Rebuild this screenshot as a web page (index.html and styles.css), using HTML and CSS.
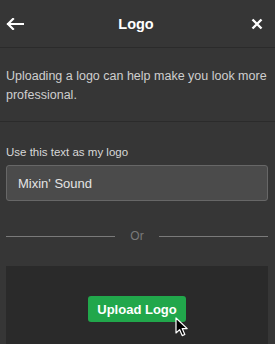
FILE: index.html
```html
<!DOCTYPE html>
<html>
<head>
    <title>Logo</title>
    <link rel="stylesheet" href="styles.css">
</head>
<body>
<div class="panel">
    <header class="panel-header">
        <button class="icon-btn" aria-label="Back">
            <svg width="18" height="12" viewBox="0 0 18 12">
                <path d="M17 6H2M7 1L2 6l5 5" fill="none" stroke="#fff" stroke-width="2.2" stroke-linecap="square"/>
            </svg>
        </button>
        <h1>Logo</h1>
        <button class="icon-btn" aria-label="Close">
            <svg width="12" height="12" viewBox="0 0 12 12">
                <path d="M1.5 1.5l9 9M10.5 1.5l-9 9" stroke="#fff" stroke-width="2.4"/>
            </svg>
        </button>
    </header>

    <div class="intro">
        <p>Uploading a logo can help make you look more professional.</p>
    </div>

    <div class="content">
        <label class="field-label" for="logoText">Use this text as my logo</label>
        <input class="text-input" id="logoText" type="text" value="Mixin' Sound">

        <div class="divider"><span>Or</span></div>

        <div class="upload-box">
            <button class="upload-btn">Upload Logo</button>
            <svg class="cursor" width="14" height="20" viewBox="0 0 14 20">
                <path d="M1 1v15l3.6-3.4 2.6 6 2.6-1.1-2.6-5.9h5z" fill="#000" stroke="#fff" stroke-width="1.2" stroke-linejoin="round"/>
            </svg>
        </div>
    </div>
</div>
</body>
</html>
```

FILE: styles.css
```css
body {
    margin: 0;
    background-color: #363636;
    font-family: "Liberation Sans", Arial, sans-serif;
    color: #d0d0d0;
}
.panel {
    width: 275px;
    height: 344px;
    overflow: hidden;
}
.panel-header {
    height: 48px;
    display: flex;
    align-items: center;
    justify-content: space-between;
    padding: 0 8px 0 5px;
    border-bottom: 1px solid #2b2b2b;
    box-sizing: border-box;
}
.panel-header h1 {
    margin: 0;
    font-size: 14.5px;
    font-weight: bold;
    color: #ffffff;
}
.icon-btn {
    background: none;
    border: none;
    padding: 0;
    display: flex;
    width: 20px;
    height: 20px;
    align-items: center;
    justify-content: center;
}
.intro {
    padding: 19px 7px 16px 6px;
    border-bottom: 1px solid #2b2b2b;
}
.intro p {
    margin: 0;
    font-size: 12.5px;
    line-height: 19px;
    color: #cfcfcf;
}
.content {
    padding: 23px 7px 0 6px;
}
.field-label {
    display: block;
    font-size: 11.5px;
    line-height: 14px;
    color: #d8d8d8;
    margin-bottom: 6px;
}
.text-input {
    display: block;
    width: 100%;
    height: 36px;
    box-sizing: border-box;
    padding: 0 11px;
    background-color: #4b4b4b;
    border: 1px solid #676767;
    border-radius: 3px;
    font-family: inherit;
    font-size: 13px;
    color: #e4e4e4;
}
.divider {
    display: flex;
    align-items: center;
    gap: 15px;
    margin-top: 28px;
    font-size: 12px;
    color: #7a7a7a;
}
.divider::before,
.divider::after {
    content: "";
    flex: 1;
    height: 1px;
    background-color: #7a7a7a;
}
.upload-box {
    position: relative;
    margin-top: 23px;
    height: 90px;
    background-color: #2a2a2a;
    display: flex;
    justify-content: center;
    padding-top: 30px;
    box-sizing: border-box;
}
.upload-btn {
    width: 98px;
    height: 26px;
    background-color: #21a74b;
    color: #ffffff;
    border: none;
    border-radius: 3px;
    font-family: inherit;
    font-size: 13px;
    font-weight: bold;
}
.cursor {
    position: absolute;
    left: 169px;
    top: 51px;
}
```
